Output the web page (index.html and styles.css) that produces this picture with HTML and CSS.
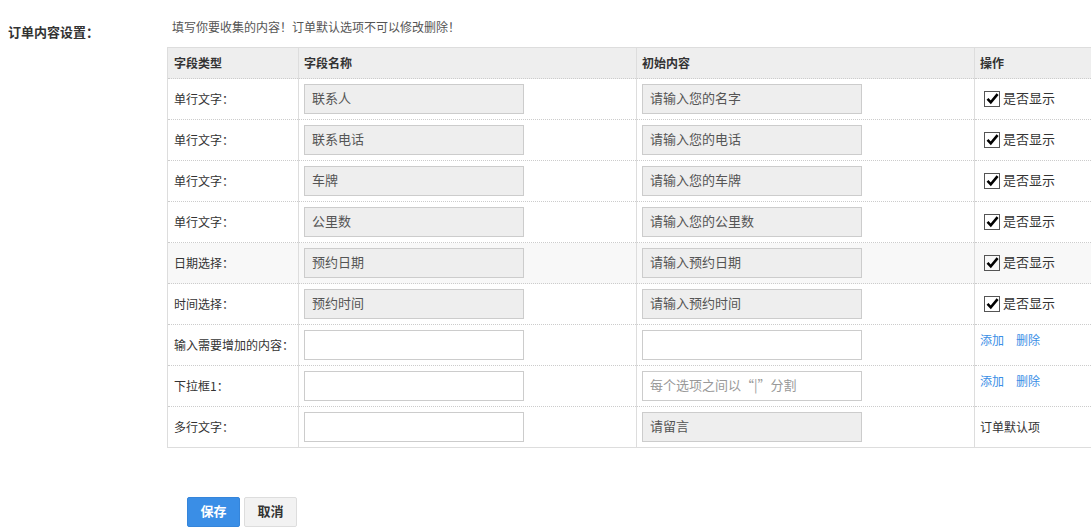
FILE: index.html
```html
<!DOCTYPE html>
<html lang="zh-CN">
<head>
<meta charset="utf-8">
<title>订单内容设置</title>
<link rel="stylesheet" href="styles.css">
</head>
<body>
<div class="page">
  <div class="form-row">
    <div class="form-label">订单内容设置：</div>
    <div class="form-body">
      <p class="hint">填写你要收集的内容！订单默认选项不可以修改删除！</p>
      <table class="fields">
        <colgroup>
          <col class="c1"><col class="c2"><col class="c3"><col class="c4">
        </colgroup>
        <thead>
          <tr><th>字段类型</th><th>字段名称</th><th>初始内容</th><th>操作</th></tr>
        </thead>
        <tbody>
          <tr>
            <td>单行文字：</td>
            <td><input class="ipt ipt-ro" value="联系人" readonly></td>
            <td><input class="ipt ipt-ro" value="请输入您的名字" readonly></td>
            <td><label class="chk"><span class="box"><svg viewBox="0 0 15 15" width="15" height="15"><path d="M2.5 7.8 L5.8 11.3 L12.6 3.2" fill="none" stroke="#000" stroke-width="2.6"/></svg></span>是否显示</label></td>
          </tr>
          <tr>
            <td>单行文字：</td>
            <td><input class="ipt ipt-ro" value="联系电话" readonly></td>
            <td><input class="ipt ipt-ro" value="请输入您的电话" readonly></td>
            <td><label class="chk"><span class="box"><svg viewBox="0 0 15 15" width="15" height="15"><path d="M2.5 7.8 L5.8 11.3 L12.6 3.2" fill="none" stroke="#000" stroke-width="2.6"/></svg></span>是否显示</label></td>
          </tr>
          <tr>
            <td>单行文字：</td>
            <td><input class="ipt ipt-ro" value="车牌" readonly></td>
            <td><input class="ipt ipt-ro" value="请输入您的车牌" readonly></td>
            <td><label class="chk"><span class="box"><svg viewBox="0 0 15 15" width="15" height="15"><path d="M2.5 7.8 L5.8 11.3 L12.6 3.2" fill="none" stroke="#000" stroke-width="2.6"/></svg></span>是否显示</label></td>
          </tr>
          <tr>
            <td>单行文字：</td>
            <td><input class="ipt ipt-ro" value="公里数" readonly></td>
            <td><input class="ipt ipt-ro" value="请输入您的公里数" readonly></td>
            <td><label class="chk"><span class="box"><svg viewBox="0 0 15 15" width="15" height="15"><path d="M2.5 7.8 L5.8 11.3 L12.6 3.2" fill="none" stroke="#000" stroke-width="2.6"/></svg></span>是否显示</label></td>
          </tr>
          <tr class="hover">
            <td>日期选择：</td>
            <td><input class="ipt ipt-ro" value="预约日期" readonly></td>
            <td><input class="ipt ipt-ro" value="请输入预约日期" readonly></td>
            <td><label class="chk"><span class="box"><svg viewBox="0 0 15 15" width="15" height="15"><path d="M2.5 7.8 L5.8 11.3 L12.6 3.2" fill="none" stroke="#000" stroke-width="2.6"/></svg></span>是否显示</label></td>
          </tr>
          <tr>
            <td>时间选择：</td>
            <td><input class="ipt ipt-ro" value="预约时间" readonly></td>
            <td><input class="ipt ipt-ro" value="请输入预约时间" readonly></td>
            <td><label class="chk"><span class="box"><svg viewBox="0 0 15 15" width="15" height="15"><path d="M2.5 7.8 L5.8 11.3 L12.6 3.2" fill="none" stroke="#000" stroke-width="2.6"/></svg></span>是否显示</label></td>
          </tr>
          <tr>
            <td>输入需要增加的内容：</td>
            <td><input class="ipt" value=""></td>
            <td><input class="ipt" value=""></td>
            <td><span class="ops"><a class="lnk" href="#">添加</a><a class="lnk" href="#">删除</a></span></td>
          </tr>
          <tr>
            <td>下拉框1：</td>
            <td><input class="ipt" value=""></td>
            <td><input class="ipt" placeholder="每个选项之间以“|”分割"></td>
            <td><span class="ops"><a class="lnk" href="#">添加</a><a class="lnk" href="#">删除</a></span></td>
          </tr>
          <tr>
            <td>多行文字：</td>
            <td><input class="ipt" value=""></td>
            <td><input class="ipt ipt-ro" value="请留言" readonly></td>
            <td>订单默认项</td>
          </tr>
        </tbody>
      </table>
    </div>
  </div>
  <div class="actions">
    <button class="btn btn-primary" type="button">保存</button>
    <button class="btn btn-default" type="button">取消</button>
  </div>
</div>
</body>
</html>
```

FILE: styles.css
```css
html, body {
  margin: 0;
  padding: 0;
  background: #fff;
}
body {
  font-family: "Noto Sans CJK SC", "Noto Sans", sans-serif;
  font-size: 12px;
  color: #333;
  overflow: hidden;
}
.page {
  width: 1091px;
  height: 527px;
  overflow: hidden;
}
.form-row {
  display: flex;
  align-items: flex-start;
}
.form-label {
  width: 167px;
  flex: none;
  box-sizing: border-box;
  padding: 24px 0 0 8px;
  font-size: 13px;
  line-height: 16px;
  font-weight: bold;
  color: #333;
}
.form-body {
  flex: none;
}
.hint {
  margin: 0 0 12px 0;
  padding: 19px 0 0 5px;
  line-height: 16px;
  font-size: 12px;
  color: #555;
}
.fields {
  border-collapse: collapse;
  table-layout: fixed;
  width: 960px;
  border: 1px solid #ddd;
}
.fields col.c1 { width: 131px; }
.fields col.c2 { width: 338px; }
.fields col.c3 { width: 338px; }
.fields col.c4 { width: 153px; }
.fields th {
  background: #eee;
  height: 30px;
  padding: 0 5px;
  text-align: left;
  font-weight: bold;
  font-size: 12px;
  line-height: 16px;
  color: #333;
  border-left: 1px solid #ddd;
  border-bottom: 1px dotted #ccc;
}
.fields td {
  height: 40px;
  padding: 0 5px;
  line-height: 16px;
  border-left: 1px solid #ddd;
  border-bottom: 1px dotted #ccc;
  vertical-align: middle;
  white-space: nowrap;
}
.fields th:first-child,
.fields td:first-child {
  padding-left: 6px;
}
.ops {
  display: inline-block;
  margin-bottom: 10px;
}
.fields tbody tr:last-child td {
  border-bottom: 1px solid #ddd;
}
.fields tr.hover td {
  background: #f8f8f8;
}
.ipt {
  display: block;
  box-sizing: border-box;
  width: 220px;
  height: 30px;
  margin: 0;
  padding: 0 7px 3px 7px;
  border: 1px solid #ccc;
  background: #fff;
  font-family: "Noto Sans CJK SC", "Noto Sans", sans-serif;
  font-size: 13px;
  color: #555;
  outline: none;
}
.ipt-ro {
  background: #eee;
}
.ipt::placeholder {
  color: #999;
}
.chk {
  display: inline-flex;
  align-items: center;
  font-size: 13px;
  color: #333;
  margin-left: 4px;
}
.chk .box {
  display: inline-block;
  box-sizing: border-box;
  width: 16px;
  height: 16px;
  border: 1px solid #555;
  margin-right: 3px;
  position: relative;
  top: 1px;
}
.chk .box svg {
  display: block;
  margin: -1px 0 0 0;
}
.lnk {
  color: #3a8ee6;
  text-decoration: none;
  margin-right: 12px;
}
.actions {
  padding: 49px 0 0 187px;
  display: flex;
  gap: 4px;
}
.btn {
  box-sizing: border-box;
  width: 53px;
  height: 30px;
  margin: 0;
  padding: 0 0 3px 0;
  font-family: "Noto Sans CJK SC", "Noto Sans", sans-serif;
  font-size: 13px;
  font-weight: bold;
  border-radius: 2px;
  cursor: pointer;
}
.btn-primary {
  background: #3a8ee6;
  border: 1px solid #3585da;
  color: #fff;
}
.btn-default {
  background: #f2f2f2;
  border: 1px solid #ddd;
  color: #333;
}
```
